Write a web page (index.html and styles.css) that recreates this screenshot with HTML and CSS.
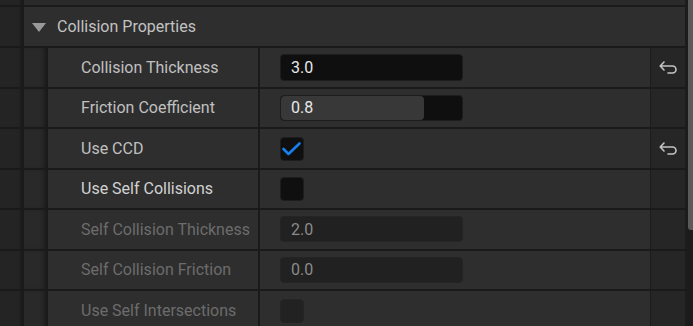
FILE: index.html
```html
<!DOCTYPE html>
<html>
<head>
<meta charset="utf-8">
<link rel="stylesheet" href="styles.css">
</head>
<body>
<div class="panel">
  <div class="tree">
    <div class="row band"><div class="c-outer"></div><div class="c-rest"></div></div>
    <div class="row header"><div class="c-outer"></div><div class="c-head"><span class="caret"></span>Collision Properties</div></div>

    <div class="row prop">
      <div class="c-outer"></div><div class="c-indent"></div>
      <div class="c-label">Collision Thickness</div>
      <div class="c-value"><div class="num">3.0</div></div>
      <div class="c-reset"><svg class="reset" width="20" height="16" viewBox="0 0 20 16"><path d="M5 3 L1.2 7 L5 11 M1.5 7 H13.5 A3.5 3.5 0 0 1 13.5 14 H9" fill="none" stroke="#c4c4c4" stroke-width="1.6" stroke-linecap="round" stroke-linejoin="round"/></svg></div>
    </div>

    <div class="row prop">
      <div class="c-outer"></div><div class="c-indent"></div>
      <div class="c-label">Friction Coefficient</div>
      <div class="c-value"><div class="num slider"><div class="fill">0.8</div></div></div>
      <div class="c-reset"></div>
    </div>

    <div class="row prop">
      <div class="c-outer"></div><div class="c-indent"></div>
      <div class="c-label">Use CCD</div>
      <div class="c-value"><div class="check"><svg width="24" height="24" viewBox="0 0 24 24"><path d="M3.5 12 L8.5 17 L19.5 6.5" fill="none" stroke="#1580ec" stroke-width="2.6" stroke-linecap="round" stroke-linejoin="round"/></svg></div></div>
      <div class="c-reset"><svg class="reset" width="20" height="16" viewBox="0 0 20 16"><path d="M5 3 L1.2 7 L5 11 M1.5 7 H13.5 A3.5 3.5 0 0 1 13.5 14 H9" fill="none" stroke="#c4c4c4" stroke-width="1.6" stroke-linecap="round" stroke-linejoin="round"/></svg></div>
    </div>

    <div class="row prop">
      <div class="c-outer"></div><div class="c-indent"></div>
      <div class="c-label bright">Use Self Collisions</div>
      <div class="c-value"><div class="check"></div></div>
      <div class="c-reset"></div>
    </div>

    <div class="row prop">
      <div class="c-outer"></div><div class="c-indent"></div>
      <div class="c-label dim">Self Collision Thickness</div>
      <div class="c-value"><div class="num off">2.0</div></div>
      <div class="c-reset"></div>
    </div>

    <div class="row prop">
      <div class="c-outer"></div><div class="c-indent"></div>
      <div class="c-label dim">Self Collision Friction</div>
      <div class="c-value"><div class="num off">0.0</div></div>
      <div class="c-reset"></div>
    </div>

    <div class="row prop">
      <div class="c-outer"></div><div class="c-indent"></div>
      <div class="c-label dim">Use Self Intersections</div>
      <div class="c-value"><div class="check off"></div></div>
      <div class="c-reset"></div>
    </div>
  </div>
  <div class="scroll"><div class="thumb"></div></div>
</div>
</body>
</html>
```

FILE: styles.css
```css
* { box-sizing: border-box; }
html, body { margin: 0; padding: 0; }
body {
  background: #1a1a1a;
  font-family: Roboto, "Noto Sans", sans-serif;
  font-size: 16px;
  color: #c0c0c0;
  overflow: hidden;
}
.panel {
  display: flex;
  width: 693px;
  height: 326px;
  overflow: hidden;
}
.tree {
  width: 685px;
  flex: none;
}
.row {
  display: flex;
  border-bottom: 2px solid #1a1a1a;
}
.band { height: 7px; }
.header { height: 41px; }
.prop { height: 40.5px; }

.c-outer {
  width: 24px;
  flex: none;
  background: #242424;
  border-right: 2px solid #1a1a1a;
  box-shadow: inset -3px 0 3px -2px rgba(0,0,0,0.35);
}
.c-rest { flex: 1; background: #2a2a2a; }
.c-head {
  flex: 1;
  background: #2e2e2e;
  display: flex;
  align-items: center;
  padding-left: 8px;
  color: #c2c2c2;
}
.caret {
  width: 0;
  height: 0;
  border-left: 7px solid transparent;
  border-right: 7px solid transparent;
  border-top: 9px solid #999999;
  margin-right: 11px;
  margin-top: 1px;
}
.c-indent {
  width: 24px;
  flex: none;
  background: #292929;
  border-right: 2px solid #1a1a1a;
  box-shadow: inset -4px 0 4px -2px rgba(0,0,0,0.35);
}
.c-label {
  width: 212px;
  flex: none;
  background: #2e2e2e;
  border-right: 2px solid #1a1a1a;
  padding-left: 33px;
  display: flex;
  align-items: center;
  color: #c0c0c0;
  white-space: nowrap;
}
.c-label.bright { color: #d2d2d2; }
.c-label.dim { color: #6c6c6c; }
.c-value {
  width: 391px;
  flex: none;
  background: #2e2e2e;
  border-right: 1px solid #1c1c1c;
  padding-left: 20px;
  display: flex;
  align-items: center;
}
.c-reset {
  width: 34px;
  flex: none;
  background: #262626;
  display: flex;
  align-items: center;
  justify-content: center;
}
.reset { display: block; margin-left: 1px; }

.num {
  width: 183px;
  height: 27px;
  background: #0f0f0f;
  border: 1px solid #1d1d1d;
  border-radius: 4px;
  padding-left: 10px;
  display: flex;
  align-items: center;
  color: #e8e8e8;
}
.num.slider {
  padding: 0;
  height: 26px;
}
.num.slider .fill {
  width: 143px;
  height: 100%;
  background: #383838;
  border-radius: 4px;
  padding-left: 10px;
  display: flex;
  align-items: center;
}
.num.off {
  background: #212121;
  border-color: #242424;
  color: #8a8a8a;
  height: 26px;
}
.check {
  width: 24px;
  height: 24px;
  background: #0f0f0f;
  border: 1px solid #1d1d1d;
  border-radius: 4px;
  margin-top: 1px;
  position: relative;
}
.check svg { display: block; margin: -1px; }
.check.off {
  background: #222222;
  border-color: #252525;
}

.scroll {
  width: 8px;
  flex: none;
  background: #1c1c1c;
}
.thumb {
  margin-left: 3px;
  width: 5px;
  height: 230px;
  background: #5a5a5a;
  border-bottom-left-radius: 3px;
}
```
